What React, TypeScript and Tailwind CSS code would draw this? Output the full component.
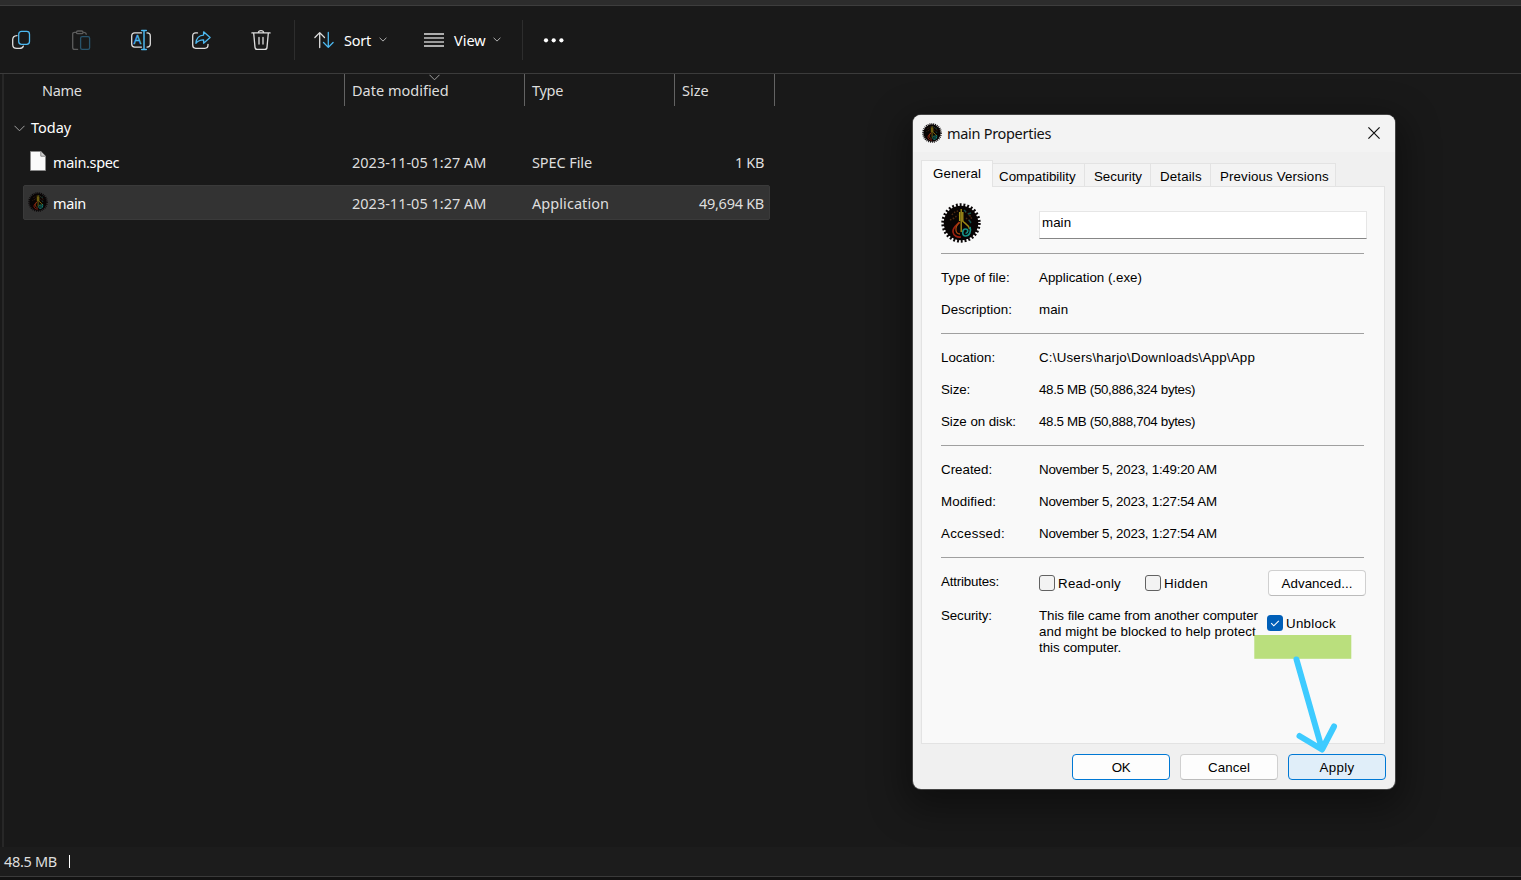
import type { ReactNode } from "react";

const BLUE = "#4cb8f0";

function Seal({ className }: { className: string }) {
  return (
    <svg viewBox="0 0 40 40" className={className} fill="none">
      <circle cx="20" cy="20" r="18" stroke="#0b0708" strokeWidth="3.400" strokeDasharray="1.900 1.870" />
      <circle cx="20" cy="20" r="17.300" fill="#080404" />
      <path d="M11 12c2-4 6-3 7-5M24 9c2 0 4 2 6 5M9 17l4-2M28 12l3 4M12 16l5-4M25 15l5 4" stroke="#4d2a12" strokeWidth="1.500" strokeDasharray="1.500 1.500" />
      <path d="M23 7l2 2M27 11l3-1M28 17l2 3" stroke="#14534d" strokeWidth="1.400" />
      <path d="M18.500 19c-2 3-7 5-6.500 10 .5 3.500 4 5.500 8 5" stroke="#9c1f10" strokeWidth="1.700" />
      <path d="M18.500 19.500c-3 2.500-4 5-3.500 8 .3 2 2 3.500 4 3.500" stroke="#a8480f" strokeWidth="1.300" />
      <path d="M21.500 18c3 3 6.500 4 7 8" stroke="#9c8a14" strokeWidth="1.500" />
      <path d="M20.200 6v23M18.600 9v9M21.800 9v9" stroke="#a8951a" strokeWidth="1.300" />
      <path d="M29 24c1.500 4.500-.5 9-4.500 9s-3.500-7 0-7 2.500 4 0 4.500" stroke="#178f84" strokeWidth="1.700" />
    </svg>
  );
}

function Icon({ children }: { children: ReactNode }) {
  return (
    <svg viewBox="0 0 20 20" className="size-5 shrink-0 overflow-visible" fill="none" stroke="#dedede" strokeWidth="1.300" strokeLinecap="round" strokeLinejoin="round">
      {children}
    </svg>
  );
}

function Chevron({ className }: { className: string }) {
  return (
    <svg viewBox="0 0 8 5" className={className} fill="none" stroke="#b0b0b0">
      <path d="M.6.8 4 4.1 7.400.8" />
    </svg>
  );
}

function ThinChevron({ className }: { className: string }) {
  return (
    <svg viewBox="0 0 11 7" className={className} fill="none" stroke="#a0a0a0">
      <path d="M.5.8l5 5 5-5" />
    </svg>
  );
}

function Toolbar() {
  return (
    <div className="flex h-[67px] shrink-0 items-center pl-[11px] text-white">
      <div className="flex gap-10">
        <Icon>
          <path d="M6 5.600C3 5.800 1.700 7 1.700 9.500v5c0 2.600 1.300 3.900 4 3.900h2.800c2 0 3.200-.7 3.800-2.200" />
          <rect x="7.700" y="1.400" width="10.800" height="12.900" rx="2.800" stroke={BLUE} />
        </Icon>
        <Icon>
          <g stroke="#5c5c5c">
            <path d="M5 2.300H3.500C2.300 2.300 1.700 3 1.700 4v13.500c0 1.200.7 1.900 1.900 1.900h3M12.500 2.300c1.800 0 2.700.6 2.700 2" />
            <rect x="5.500" y="1" width="6.500" height="2.700" rx="1.300" />
          </g>
          <rect x="9.600" y="6.700" width="9" height="12.700" rx="1.600" stroke="#28536b" />
        </Icon>
        <Icon>
          <path d="M10.500 2.900H3.700C1.700 2.900.7 4 .7 5.900v8.200c0 1.900 1 3 3 3h6.800M16 2.900c2.300 0 3.300 1 3.300 3v8.200c0 2-1 3-3.300 3" />
          <path d="M10.700.6h4.600M10.700 19.400h4.600M13 .6v18.800" stroke={BLUE} strokeWidth="1.500" />
          <text x="2.700" y="13.900" fill={BLUE} stroke={BLUE} strokeWidth=".4" className="font-['Open_Sans',sans-serif] text-[12px]">A</text>
        </Icon>
        <Icon>
          <path d="M6.500 2.900H4.700c-2 0-3 1-3 3v9.200c0 2 1 3.200 3 3.200h9.100c2 0 3.200-1.200 3.200-3.200v-.8" />
          <path d="M12.600 1.800l6.500 5.800-6.500 5.600V9.900c-3.500-.1-5.600.9-7.700 3.300.4-4.800 3-7.800 7.700-8.100z" stroke={BLUE} />
        </Icon>
        <Icon>
          <path d="M.9 2.900h18.200M7.300 2.700C7.500 1.300 8.500.7 10 .7s2.500.6 2.700 2M2.700 3.200l1.300 14.200c.1 1.300.9 2 2.200 2h7.600c1.300 0 2.100-.7 2.200-2l1.300-14.200M8 7.500v6.500M12 7.500v6.500" />
        </Icon>
      </div>
      <div className="ml-[23px] h-10 w-px bg-[#2d2d2d]" />
      <div className="ml-[19px] flex items-center font-['Noto_Sans',sans-serif] text-[14.500px]">
        <Icon>
          <path d="M5.700 17.500V3M.9 7.500l4.800-4.900 4.800 4.900" />
          <path d="M14.300 2.500V17M9.500 12.500l4.800 4.900 4.800-4.900" stroke={BLUE} />
        </Icon>
        <span className="ml-[10px] w-[35px] pt-[2px] tracking-[-0.2px]">Sort</span>
        <Chevron className="h-[5px] w-2" />
      </div>
      <div className="ml-[37px] flex items-center font-['Noto_Sans',sans-serif] text-[14.500px]">
        <Icon>
          <path d="M0 4h20M0 16h20" strokeLinecap="butt" />
          <path d="M0 8h20M0 12h20" strokeLinecap="butt" stroke="#c4c4c4" />
        </Icon>
        <span className="ml-[10px] w-[39px] pt-[2px]">View</span>
        <Chevron className="h-[5px] w-2" />
      </div>
      <div className="ml-[21px] h-10 w-px bg-[#2d2d2d]" />
      <svg viewBox="0 0 22 6" className="ml-5 h-1.5 w-[22px]" fill="#ffffff">
        <circle cx="3" cy="3.300" r="2.100" />
        <circle cx="10.700" cy="3.300" r="2.100" />
        <circle cx="18.400" cy="3.300" r="2.100" />
      </svg>
    </div>
  );
}

function Files() {
  return (
    <div className="flex flex-1 flex-col border-t border-[#3b3b3b] pl-[2px] font-['Noto_Sans',sans-serif] text-[14.500px] text-[#dedede]">
      <div className="flex flex-1 flex-col border-l-2 border-[#272727]">
        <div className="flex h-8 items-center">
          <div className="flex h-full w-[341px] items-center border-r border-[#636363] pt-[2px] pl-[38px] tracking-[-0.3px]">Name</div>
          <div className="relative flex h-full w-[180px] items-center border-r border-[#636363] pt-[2px] pl-[7px]">
            Date modified
            <ThinChevron className="absolute top-0 left-[84px] h-[7px] w-[11px]" />
          </div>
          <div className="flex h-full w-[150px] items-center border-r border-[#636363] pt-[2px] pl-[7px] tracking-[-0.3px]">Type</div>
          <div className="flex h-full w-[100px] items-center border-r border-[#636363] pt-[2px] pl-[7px]">Size</div>
        </div>
        <div className="mt-[5px] flex h-[34px] items-center pl-[10px] text-white">
          <ThinChevron className="h-[7px] w-[11px]" />
          <span className="ml-[6px]">Today</span>
        </div>
        <div className="ml-5 flex h-9 w-[746px] items-center">
          <svg viewBox="0 0 16 20" className="mb-[4px] ml-[6px] h-5 w-4" fill="#fafafa" stroke="#8a8a8a">
            <path d="M.5.5h10.300l4.700 4.700v14.300H.5z" />
            <path d="M10.800.5v4.700h4.700" fill="#d0d0d0" />
          </svg>
          <span className="ml-[7px] w-[299px] tracking-[-0.35px] text-white">main.spec</span>
          <span className="w-[180px]">2023-11-05 1:27 AM</span>
          <span className="w-[150px] tracking-[-0.1px]">SPEC File</span>
          <span className="w-[82px] text-right tracking-[-0.35px]">1 KB</span>
        </div>
        <div className="mt-[4px] ml-[19px] flex h-[35px] w-[747px] items-center rounded-[2px] border border-[#3a3a3a] bg-[#333333] pt-px">
          <Seal className="mb-[3px] ml-[4px] size-5" />
          <span className="ml-[5px] w-[299px] pt-px tracking-[-0.4px] text-white">main</span>
          <span className="w-[180px] pt-px">2023-11-05 1:27 AM</span>
          <span className="w-[150px] pt-px tracking-[0.06px]">Application</span>
          <span className="w-[82px] pt-px text-right tracking-[-0.28px]">49,694 KB</span>
        </div>
      </div>
    </div>
  );
}

function Row({ label, labelClass, value, valueClass }: { label: string; labelClass: string; value: string; valueClass: string }) {
  return (
    <div className="flex h-8 items-center pt-[2px] whitespace-nowrap">
      <span className={`w-[98px] ${labelClass}`}>{label}</span>
      <span className={valueClass}>{value}</span>
    </div>
  );
}

function Section({ children }: { children: ReactNode }) {
  return <div className="mr-5 border-t border-[#a0a0a0] pt-[7px] pb-2">{children}</div>;
}

function Properties() {
  return (
    <div className="absolute top-[115px] left-[913px] flex h-[674px] w-[482px] flex-col overflow-hidden rounded-[8px] bg-[#f0f0f0] font-['Liberation_Sans',sans-serif] text-[13.333px] text-black shadow-[0_0_0_1px_#444444,0_12px_36px_8px_rgba(0,0,0,0.4)]">
      <div className="flex h-[37px] shrink-0 items-center bg-[#f3f3f3] pr-[15px] pl-[9px]">
        <Seal className="mb-[2px] size-5" />
        <span className="ml-[5px] flex-1 font-['Noto_Sans',sans-serif] text-[14.500px] tracking-[-0.3px] text-[#111111]">main Properties</span>
        <svg viewBox="0 0 12 12" className="mb-[2px] size-3" stroke="#111111" strokeWidth="1.200">
          <path d="M.4.4l11.200 11.200M11.600.4.4 11.600" />
        </svg>
      </div>
      <div className="mt-[8px] ml-2 flex h-[26px] shrink-0 items-end whitespace-nowrap">
        <div className="relative z-10 -mb-px flex h-[27px] w-[72px] items-center border border-b-0 border-[#e3e3e3] bg-[#f9f9f9] pl-[11px] tracking-[0.08px]">General</div>
        <div className="flex h-[23px] w-[92px] items-center border-t border-r border-[#e3e3e3] bg-[#f3f3f3] pt-[3px] pl-[6px] tracking-[0.04px]">Compatibility</div>
        <div className="flex h-[23px] w-[66px] items-center border-t border-r border-[#e3e3e3] bg-[#f3f3f3] pt-[3px] pl-[9px] tracking-[-0.02px]">Security</div>
        <div className="flex h-[23px] w-[60px] items-center border-t border-r border-[#e3e3e3] bg-[#f3f3f3] pt-[3px] pl-[9px] tracking-[0.15px]">Details</div>
        <div className="flex h-[23px] w-[125px] items-center border-t border-r border-[#e3e3e3] bg-[#f3f3f3] pt-[3px] pl-[9px] tracking-[0.12px]">Previous Versions</div>
      </div>
      <div className="ml-2 flex h-[558px] w-[464px] shrink-0 flex-col border border-[#e3e3e3] bg-[#f9f9f9] pl-[19px]">
        <div className="flex h-[66px] shrink-0 pt-[16px]">
          <Seal className="size-10" />
          <div className="mt-[8px] ml-[58px] flex h-[28px] w-[328px] border border-[#e6e6e6] border-b-[#868686] bg-white pt-[1px] pl-[2px] tracking-[0.05px]">main</div>
        </div>
        <Section>
          <Row label="Type of file:" labelClass="tracking-[0.05px]" value="Application (.exe)" valueClass="" />
          <Row label="Description:" labelClass="tracking-[0.05px]" value="main" valueClass="tracking-[0.05px]" />
        </Section>
        <Section>
          <Row label="Location:" labelClass="" value="C:\Users\harjo\Downloads\App\App" valueClass="tracking-[0.2px]" />
          <Row label="Size:" labelClass="tracking-[-0.1px]" value="48.5 MB (50,886,324 bytes)" valueClass="tracking-[-0.32px]" />
          <Row label="Size on disk:" labelClass="tracking-[-0.05px]" value="48.5 MB (50,888,704 bytes)" valueClass="tracking-[-0.32px]" />
        </Section>
        <Section>
          <Row label="Created:" labelClass="" value="November 5, 2023, 1:49:20 AM" valueClass="tracking-[-0.24px]" />
          <Row label="Modified:" labelClass="tracking-[0.1px]" value="November 5, 2023, 1:27:54 AM" valueClass="tracking-[-0.24px]" />
          <Row label="Accessed:" labelClass="tracking-[0.27px]" value="November 5, 2023, 1:27:54 AM" valueClass="tracking-[-0.24px]" />
        </Section>
        <div className="mr-5 border-t border-[#a0a0a0]" />
        <div className="mt-[12px] flex h-[26px] shrink-0 items-center">
          <span className="mb-[2px] w-[98px] tracking-[-0.19px]">Attributes:</span>
          <span className="size-4 rounded-[3px] border border-[#626262] bg-[#f3f3f3]" />
          <span className="ml-[3px] w-[87px] pt-[2px] tracking-[0.25px]">Read-only</span>
          <span className="size-4 rounded-[3px] border border-[#626262] bg-[#f3f3f3]" />
          <span className="ml-[3px] w-[104px] pt-[2px] tracking-[0.28px]">Hidden</span>
          <div className="flex h-[26px] w-[98px] items-center justify-center rounded-[4px] border border-[#d0d0d0] border-b-[#bbbbbb] bg-[#fdfdfd] pt-[2px] tracking-[0.04px]">Advanced...</div>
        </div>
        <div className="flex pt-[12px] leading-4 whitespace-nowrap">
          <span className="w-[98px] tracking-[-0.1px]">Security:</span>
          <div className="w-[228px]">
            <div className="tracking-[-0.05px]">This file came from another computer</div>
            <div className="tracking-[0.05px]">and might be blocked to help protect</div>
            <div className="tracking-[-0.06px]">this computer.</div>
          </div>
          <div className="mt-[7px] flex h-4 items-center">
            <svg viewBox="0 0 16 16" className="size-4" fill="none">
              <rect width="16" height="16" rx="3.500" fill="#005fb8" />
              <path d="M4.200 8.200l2.600 2.600 5-5" stroke="#ffffff" strokeWidth="1.100" />
            </svg>
            <span className="ml-[3px] pt-[2px] tracking-[0.26px]">Unblock</span>
          </div>
        </div>
      </div>
      <div className="flex gap-[10px] pt-[10px] pl-[159px]">
        <div className="flex h-[26px] w-[98px] items-center justify-center rounded-[4px] border border-[#0078d4] bg-[#fdfdfd] pt-[2px] tracking-[-0.5px]">OK</div>
        <div className="flex h-[26px] w-[98px] items-center justify-center rounded-[4px] border border-[#d0d0d0] border-b-[#bbbbbb] bg-[#fdfdfd] pt-[2px] tracking-[0.1px]">Cancel</div>
        <div className="flex h-[26px] w-[98px] items-center justify-center rounded-[4px] border border-[#0078d4] bg-[#e0eef9] pt-[2px] tracking-[0.3px]">Apply</div>
      </div>
      <svg viewBox="1250 630 110 126" className="absolute top-[515px] left-[337px] h-[126px] w-[110px]" fill="none">
        <rect x="1254.300" y="635" width="97" height="23.800" fill="#badf7d" />
        <path d="M1296.500 659.500L1322 749M1299.500 736l22.500 13.500 12-23" stroke="#3ecbff" strokeWidth="6" strokeLinecap="round" strokeLinejoin="round" />
      </svg>
    </div>
  );
}

export default function App() {
  return (
    <div className="relative flex h-[880px] w-[1521px] flex-col overflow-hidden bg-[#191919]">
      <div className="h-[6px] shrink-0 border-b border-[#3d3d3d] bg-[#2c2c2c]" />
      <Toolbar />
      <Files />
      <div className="flex h-[33px] shrink-0 flex-col bg-[#1c1c1c]">
        <div className="flex h-[29px] items-center pt-px pl-1 font-['Noto_Sans',sans-serif] text-[14.500px] text-[#dedede]">
          <span className="w-[65px] tracking-[-0.32px]">48.5 MB</span>
          <span className="mb-px h-[13px] w-px bg-[#ffffff]" />
        </div>
        <div className="h-px bg-[#3a3a3a]" />
        <div className="h-[3px] bg-[#121212]" />
      </div>
      <Properties />
    </div>
  );
}
